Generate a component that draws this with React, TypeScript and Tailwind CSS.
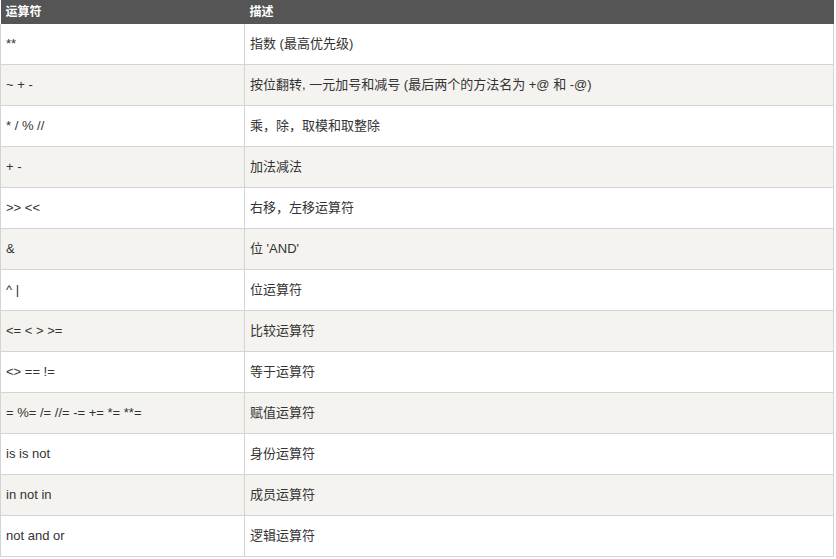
import React from 'react';

const rows: [string, string][] = [
  ['**', '指数 (最高优先级)'],
  ['~ + -', '按位翻转, 一元加号和减号 (最后两个的方法名为 +@ 和 -@)'],
  ['* / % //', '乘，除，取模和取整除'],
  ['+ -', '加法减法'],
  ['>> <<', '右移，左移运算符'],
  ['&', "位 'AND'"],
  ['^ |', '位运算符'],
  ['<= < > >=', '比较运算符'],
  ['<> == !=', '等于运算符'],
  ['= %= /= //= -= += *= **=', '赋值运算符'],
  ['is is not', '身份运算符'],
  ['in not in', '成员运算符'],
  ['not and or', '逻辑运算符'],
];

const App: React.FC = () => {
  return (
    <div className="bg-white w-[836px] h-[559px] font-['Liberation_Sans','Noto_Sans_CJK_SC',sans-serif] text-[13px] text-[#333]">
      <table className="w-[834px] border-collapse table-fixed">
        <thead>
          <tr className="bg-[#555] text-white h-[24px]">
            <th className="w-[244px] text-left font-bold px-[5px] py-0 leading-[14px] text-[12px]">运算符</th>
            <th className="text-left font-bold px-[5px] py-0 leading-[14px] text-[12px]">描述</th>
          </tr>
        </thead>
        <tbody>
          {rows.map(([op, desc], i) => (
            <tr key={i} className={i % 2 === 1 ? 'bg-[#f4f3ef]' : 'bg-white'}>
              <td className="border border-[#d4d4d4] border-t-0 px-[5px] py-[10px] leading-[20px] whitespace-pre">{op}</td>
              <td className="border border-[#d4d4d4] border-t-0 px-[5px] py-[10px] leading-[20px]">{desc}</td>
            </tr>
          ))}
        </tbody>
      </table>
    </div>
  );
};

export default App;
